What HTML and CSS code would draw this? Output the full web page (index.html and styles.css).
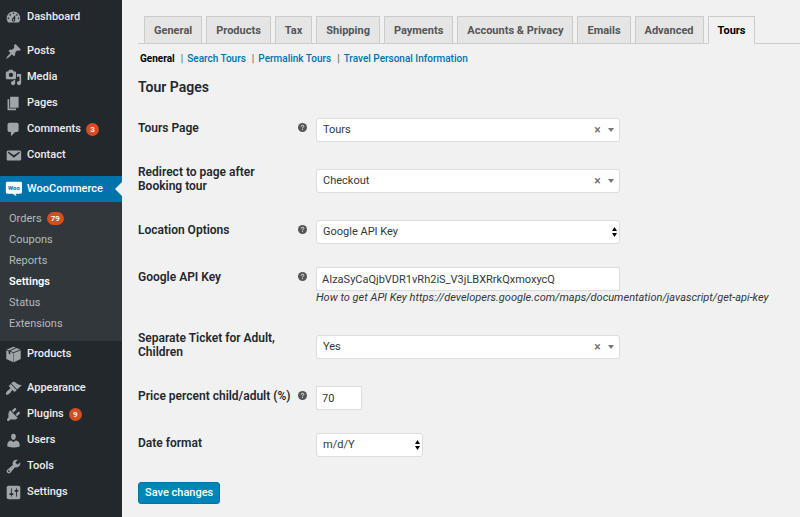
FILE: index.html
```html
<!DOCTYPE html>
<html lang="en">
<head>
	<meta charset="UTF-8">
	<meta name="viewport" content="width=device-width, initial-scale=1">
	<title>WooCommerce settings</title>
	<link rel="stylesheet" href="styles.css">
</head>
<body>
	<div class="wrapper">
		<nav class="sidebar" aria-label="Main menu">
			<ul class="menu">
				<li><a href="#"><svg class="icon" viewBox="0 0 20 20"><path d="M3.76 16h12.48c1.1-1.37 1.76-3.11 1.76-5 0-4.42-3.58-8-8-8s-8 3.58-8 8c0 1.89.66 3.63 1.76 5zM10 4c.55 0 1 .45 1 1s-.45 1-1 1-1-.45-1-1 .45-1 1-1zM6 6c.55 0 1 .45 1 1s-.45 1-1 1-1-.45-1-1 .45-1 1-1zm8 0c.55 0 1 .45 1 1s-.45 1-1 1-1-.45-1-1 .45-1 1-1zm-5.37 5.55L12 7v6c0 1.1-.9 2-2 2s-2-.9-2-2c0-.57.24-1.08.63-1.45zM4 10c.55 0 1 .45 1 1s-.45 1-1 1-1-.45-1-1 .45-1 1-1zm12 0c.55 0 1 .45 1 1s-.45 1-1 1-1-.45-1-1 .45-1 1-1zm-5 3c0-.55-.45-1-1-1s-1 .45-1 1 .45 1 1 1 1-.45 1-1z"/></svg>Dashboard</a></li>
				<li class="group"><a href="#"><svg class="icon" viewBox="0 0 20 20"><path d="M10.44 3.02l1.82-1.82 6.36 6.35-1.83 1.82c-1.05-.68-2.48-.57-3.41.36l-.75.75c-.92.93-1.04 2.35-.35 3.41l-1.83 1.82-2.41-2.41-2.8 2.79c-.42.42-3.38 2.71-3.8 2.29s1.86-3.39 2.28-3.81l2.79-2.79L4.1 9.36l1.83-1.82c1.05.69 2.48.57 3.4-.36l.75-.75c.93-.92 1.05-2.35.36-3.41z"/></svg>Posts</a></li>
				<li><a href="#"><svg class="icon" viewBox="0 0 20 20"><path d="M13 11V4c0-.55-.45-1-1-1h-1.67L9 1H5L3.67 3H2c-.55 0-1 .45-1 1v7c0 .55.45 1 1 1h10c.55 0 1-.45 1-1zM7 4.5c1.38 0 2.5 1.12 2.5 2.5S8.38 9.5 7 9.5 4.5 8.38 4.5 7 5.62 4.5 7 4.5zM14 6h5v10.5c0 1.38-1.12 2.5-2.5 2.5S14 17.88 14 16.5s1.12-2.5 2.5-2.5c.17 0 .34.02.5.05V9h-3V6zm-4 8.05V13h2v3.5c0 1.38-1.12 2.5-2.5 2.5S7 17.88 7 16.5 8.12 14 9.5 14c.17 0 .34.02.5.05z"/></svg>Media</a></li>
				<li><a href="#"><svg class="icon" viewBox="0 0 20 20"><path d="M6 15V2h10v13H6zm-1 1h8v2H3V5h2v11z"/></svg>Pages</a></li>
				<li><a href="#"><svg class="icon" viewBox="0 0 20 20"><path d="M5 2h9c1.1 0 2 .9 2 2v7c0 1.1-.9 2-2 2h-2l-5 5v-5H5c-1.1 0-2-.9-2-2V4c0-1.1.9-2 2-2z"/></svg>Comments<span class="count">3</span></a></li>
				<li><a href="#"><svg class="icon" viewBox="0 0 20 20"><path d="M3.87 4h13.25C18.37 4 19 4.59 19 5.79v8.42c0 1.19-.63 1.79-1.88 1.79H3.87c-1.25 0-1.88-.6-1.88-1.79V5.79c0-1.2.63-1.79 1.88-1.79zm6.62 8.6l6.74-5.53c.24-.2.43-.66.13-1.07-.29-.41-.82-.42-1.17-.17l-5.7 3.86L4.8 5.83c-.35-.25-.88-.24-1.17.17-.3.41-.11.87.13 1.07z"/></svg>Contact</a></li>
				<li class="group current">
					<a href="#"><svg class="icon" viewBox="0 0 20 20"><path d="M3 1h15c1.500 0 2 .8 2 2v10c0 1.400-.8 2-2 2h-5.500l1 3-4.500-3H3c-1.400 0-2-.8-2-2V3c0-1.300.7-2 2-2z"/><text class="woo" x="10.500" y="10.500" text-anchor="middle">Woo</text></svg>WooCommerce</a>
					<ul class="submenu">
						<li><a href="#">Orders<span class="count">79</span></a></li>
						<li><a href="#">Coupons</a></li>
						<li><a href="#">Reports</a></li>
						<li><a class="on" href="#">Settings</a></li>
						<li><a href="#">Status</a></li>
						<li><a href="#">Extensions</a></li>
					</ul>
				</li>
				<li><a href="#"><svg class="icon" viewBox="0 0 20 20"><path d="M10 1l2.600.9L5 5.200 2 4.200zM13.500 2.300l4.500 1.800L10 7.400 6.300 6zM1.500 5l2.900 1.100v3l1.800.8V6.900l3.600 1.400V19l-8.300-3.600zM18.500 5v10.400L10.300 19V8.300z"/></svg>Products</a></li>
				<li class="group"><a href="#"><svg class="icon" viewBox="0 0 20 20"><path d="M14.480 11.060L7.410 3.990l1.500-1.500c.5-.56 2.300-.47 3.510.32 1.210.8 1.430 1.280 2.910 2.100 1.180.64 2.450 1.260 4.450.85zm-.71.71L6.700 4.700 4.930 6.470c-.39.39-.39 1.020 0 1.410l1.060 1.060c.39.39.39 1.030 0 1.420-.6.6-1.430 1.110-2.210 1.690-.35.26-.7.53-1.010.84C1.430 14.230.4 16.080 1.400 17.070c.99 1 2.840-.03 4.180-1.360.31-.31.58-.66.85-1.020.57-.78 1.080-1.610 1.690-2.210.39-.39 1.020-.39 1.410 0l1.060 1.060c.39.39 1.020.39 1.410 0z"/></svg>Appearance</a></li>
				<li><a href="#"><svg class="icon" viewBox="0 0 20 20"><path d="M13.110 4.360L9.870 7.600 8 5.730l3.240-3.240c.35-.34 1.050-.2 1.560.32.52.51.66 1.210.31 1.550zm-8 1.770l.91-1.120 9.010 9.010-1.190.84c-.71.71-2.630 1.160-3.820 1.160H6.140L4.900 17.260c-.59.59-1.540.59-2.120 0-.59-.58-.59-1.530 0-2.120l1.240-1.240v-3.880c0-1.130.4-3.190 1.090-3.890zm7.260 3.970l3.240-3.240c.34-.35 1.040-.21 1.550.31.52.51.66 1.210.31 1.550l-3.240 3.250z"/></svg>Plugins<span class="count">9</span></a></li>
				<li><a href="#"><svg class="icon" viewBox="0 0 20 20"><path d="M10 9.250c-2.270 0-2.730-3.440-2.730-3.440C7 4.020 7.820 2 9.970 2c2.160 0 2.980 2.020 2.710 3.810 0 0-.41 3.440-2.680 3.440zm0 2.570L12.720 10c2.390 0 4.520 2.330 4.520 4.530v2.490s-3.650 1.130-7.240 1.130c-3.650 0-7.240-1.130-7.240-1.130v-2.490c0-2.250 1.940-4.480 4.470-4.480z"/></svg>Users</a></li>
				<li><a href="#"><svg class="icon" viewBox="0 0 20 20"><path d="M16.680 9.770c-1.340 1.340-3.300 1.670-4.950.99l-5.410 6.520c-.99.99-2.590.99-3.580 0s-.99-2.590 0-3.570l6.520-5.420c-.68-1.650-.35-3.610.99-4.950 1.280-1.280 3.120-1.620 4.720-1.060l-2.890 2.890 2.820 2.820 2.860-2.870c.53 1.580.18 3.390-1.080 4.650zM3.810 16.210c.4.39 1.040.39 1.430 0 .4-.4.4-1.040 0-1.430-.39-.4-1.030-.4-1.430 0-.39.39-.39 1.030 0 1.430z"/></svg>Tools</a></li>
				<li><a href="#"><svg class="icon" viewBox="0 0 20 20"><path d="M18 16V4c0-1.100-.9-2-2-2H4c-1.100 0-2 .9-2 2v12c0 1.100.9 2 2 2h12c1.100 0 2-.9 2-2zM8 11h1c.55 0 1 .45 1 1s-.45 1-1 1H8v1.500c0 .28-.22.5-.5.5s-.5-.22-.5-.5V13H6c-.55 0-1-.45-1-1s.45-1 1-1h1V5.500c0-.28.22-.5.5-.5s.5.22.5.5V11zm5-2h-1c-.55 0-1-.45-1-1s.45-1 1-1h1V5.500c0-.28.22-.5.5-.5s.5.22.5.5V7h1c.55 0 1 .45 1 1s-.45 1-1 1h-1v5.500c0 .28-.22.5-.5.5s-.5-.22-.5-.5V9z"/></svg>Settings</a></li>
			</ul>
		</nav>
		<main class="content">
			<nav class="tabs" aria-label="Settings tabs">
				<a href="#">General</a>
				<a href="#">Products</a>
				<a href="#">Tax</a>
				<a href="#">Shipping</a>
				<a href="#">Payments</a>
				<a href="#">Accounts &amp; Privacy</a>
				<a href="#">Emails</a>
				<a href="#">Advanced</a>
				<a class="on" href="#">Tours</a>
			</nav>
			<ul class="sections">
				<li><a class="on" href="#">General</a></li>
				<li><a href="#">Search Tours</a></li>
				<li><a href="#">Permalink Tours</a></li>
				<li><a href="#">Travel Personal Information</a></li>
			</ul>
			<h2>Tour Pages</h2>
			<form>
				<div class="row">
					<div class="title">
						<label for="tours_page">Tours Page</label>
						<svg class="help" viewBox="0 0 10 10"><circle cx="5" cy="5" r="5"/><path d="M3.500 4q0-1.500 1.500-1.500T6.500 3.900Q6.500 4.700 5 5.300V6M5 6.900v1"/></svg>
					</div>
					<div class="field enhanced">
						<div class="select">
							<select id="tours_page"><option>Tours</option></select>
							<button class="clear" type="button" aria-label="Clear">×</button>
							<svg class="arrow" viewBox="0 0 6 4"><path d="M0 0h6L3 4z"/></svg>
						</div>
					</div>
				</div>
				<div class="row">
					<div class="title">
						<label for="redirect">Redirect to page after Booking tour</label>
					</div>
					<div class="field enhanced">
						<div class="select">
							<select id="redirect"><option>Checkout</option></select>
							<button class="clear" type="button" aria-label="Clear">×</button>
							<svg class="arrow" viewBox="0 0 6 4"><path d="M0 0h6L3 4z"/></svg>
						</div>
					</div>
				</div>
				<div class="row">
					<div class="title">
						<label for="location">Location Options</label>
						<svg class="help" viewBox="0 0 10 10"><circle cx="5" cy="5" r="5"/><path d="M3.500 4q0-1.500 1.500-1.500T6.500 3.900Q6.500 4.700 5 5.300V6M5 6.900v1"/></svg>
					</div>
					<div class="field">
						<div class="select">
							<select id="location"><option>Google API Key</option></select>
							<svg class="updown" viewBox="0 0 5 10"><path d="M0 4h5L2.500 0zM0 6h5l-2.500 4z"/></svg>
						</div>
					</div>
				</div>
				<div class="row">
					<div class="title">
						<label for="api_key">Google API Key</label>
						<svg class="help" viewBox="0 0 10 10"><circle cx="5" cy="5" r="5"/><path d="M3.500 4q0-1.500 1.500-1.500T6.500 3.900Q6.500 4.700 5 5.300V6M5 6.900v1"/></svg>
					</div>
					<div class="field">
						<input type="text" id="api_key" value="AIzaSyCaQjbVDR1vRh2iS_V3jLBXRrkQxmoxycQ">
						<p class="desc">How to get API Key https://developers.google.com/maps/documentation/javascript/get-api-key</p>
					</div>
				</div>
				<div class="row">
					<div class="title">
						<label for="ticket">Separate Ticket for Adult, Children</label>
					</div>
					<div class="field enhanced">
						<div class="select">
							<select id="ticket"><option>Yes</option></select>
							<button class="clear" type="button" aria-label="Clear">×</button>
							<svg class="arrow" viewBox="0 0 6 4"><path d="M0 0h6L3 4z"/></svg>
						</div>
					</div>
				</div>
				<div class="row">
					<div class="title">
						<label for="percent">Price percent child/adult (%)</label>
						<svg class="help" viewBox="0 0 10 10"><circle cx="5" cy="5" r="5"/><path d="M3.500 4q0-1.500 1.500-1.500T6.500 3.900Q6.500 4.700 5 5.300V6M5 6.900v1"/></svg>
					</div>
					<div class="field">
						<input class="small" type="text" id="percent" value="70">
					</div>
				</div>
				<div class="row">
					<div class="title">
						<label for="date_format">Date format</label>
					</div>
					<div class="field">
						<div class="select short">
							<select id="date_format"><option>m/d/Y</option></select>
							<svg class="updown" viewBox="0 0 5 10"><path d="M0 4h5L2.500 0zM0 6h5l-2.500 4z"/></svg>
						</div>
					</div>
				</div>
				<button class="save" type="submit">Save changes</button>
			</form>
		</main>
	</div>
</body>
</html>
```
FILE: styles.css
```css
*{
	margin: 0;
	padding: 0;
	box-sizing: border-box;
}
body{
	background: #f1f1f1;
	color: #32373c;
	font-family: Roboto, "Liberation Sans", sans-serif;
	font-size: 11px;
	line-height: 14px;
}
ul{
	list-style: none;
}
a{
	color: #0073aa;
	text-decoration: none;
}
.wrapper{
	display: flex;
	min-height: 100vh;
}

/* sidebar */
.sidebar{
	flex: 0 0 122px;
	padding-top: 4px;
	background: #23282d;
}
.menu a{
	display: flex;
	align-items: center;
	height: 26px;
	padding-left: 5px;
	color: #eee;
	font-weight: 500;
}
.group{
	margin-top: 8px;
}
.icon{
	width: 17px;
	height: 17px;
	margin-right: 5px;
	fill: #a0a5aa;
}
.count{
	min-width: 13px;
	height: 13px;
	margin-left: 5px;
	padding: 0 4px;
	border-radius: 7px;
	background: #d54e21;
	color: #fff;
	font-size: 8px;
	font-weight: 600;
	line-height: 13px;
	text-align: center;
}
.current > a{
	position: relative;
	background: #0073aa;
	color: #fff;
}
.current > a::after{
	content: '';
	position: absolute;
	right: 0;
	top: 6px;
	border: 7px solid transparent;
	border-right-color: #f1f1f1;
	border-left: 0;
}
.current .icon{
	fill: #fff;
}
.current .woo{
	fill: #0073aa;
	font-size: 7px;
	font-weight: 700;
}
.submenu{
	padding: 6px 0 7px;
	background: #32373c;
}
.submenu a{
	height: 21px;
	padding-left: 9px;
	color: #b4b9be;
	font-weight: 400;
}
.submenu a.on{
	color: #fff;
	font-weight: 600;
}

/* content */
.content{
	flex: 1;
	min-width: 0;
	padding: 16px 0 12px 16px;
}
.tabs{
	display: flex;
	gap: 4px;
	padding-left: 6px;
	border-bottom: 1px solid #ccc;
}
.tabs a{
	height: 28px;
	margin-bottom: -1px;
	padding: 0 9px;
	border: 1px solid #ccc;
	background: #e5e5e5;
	color: #555;
	font-weight: 700;
	line-height: 27px;
	white-space: nowrap;
}
.tabs a.on{
	border-bottom-color: #f1f1f1;
	background: #f1f1f1;
	color: #000;
}
.sections{
	display: flex;
	margin-top: 8px;
	padding-left: 2px;
	font-size: 10px;
	font-weight: 500;
}
.sections li + li::before{
	content: '|';
	margin: 0 4px 0 6px;
	color: #666;
}
.sections a.on{
	color: #000;
	font-weight: 700;
}
h2{
	margin-top: 13px;
	color: #23282d;
	font-size: 14px;
	font-weight: 600;
	line-height: 16px;
}
form{
	margin-top: 9px;
}
.row{
	display: grid;
	grid-template-columns: 169px 1fr;
	column-gap: 9px;
}
.title{
	display: flex;
	justify-content: space-between;
	padding: 17px 0 13px;
	color: #23282d;
	font-size: 12px;
	font-weight: 600;
}
.title label{
	max-width: 156px;
}
.help{
	flex: none;
	width: 9px;
	height: 9px;
	margin-top: 2px;
	fill: #555;
}
.help path{
	fill: none;
	stroke: #f1f1f1;
}
.field{
	align-self: center;
	padding: 14px 0 9px;
}
.enhanced{
	padding: 7px 0 0;
}
.select{
	position: relative;
	max-width: 304px;
}
.short{
	max-width: 107px;
}
select,
input{
	display: block;
	width: 100%;
	height: 24px;
	border: 1px solid #ddd;
	background: #fff;
	color: #32373c;
	font: inherit;
}
select{
	appearance: none;
	padding: 0 6px;
	border-radius: 3px;
}
input{
	max-width: 304px;
	padding: 0 5px;
}
.small{
	max-width: 46px;
}
.clear{
	position: absolute;
	top: 6px;
	right: 18px;
	width: 9px;
	border: 0;
	background: none;
	color: #777;
	font: inherit;
	font-size: 12px;
	font-weight: 700;
	line-height: 12px;
}
.arrow{
	position: absolute;
	top: 10px;
	right: 6px;
	width: 6px;
	height: 4px;
	fill: #777;
	pointer-events: none;
}
.updown{
	position: absolute;
	top: 7px;
	right: 3px;
	width: 5px;
	height: 10px;
	fill: #000;
	pointer-events: none;
}
.desc{
	font-style: italic;
	white-space: nowrap;
}
.save{
	height: 22px;
	margin-top: 16px;
	padding: 0 6px;
	border: 1px solid #0073aa;
	border-radius: 3px;
	background: #0085ba;
	color: #fff;
	font: inherit;
	font-weight: 500;
}
```
